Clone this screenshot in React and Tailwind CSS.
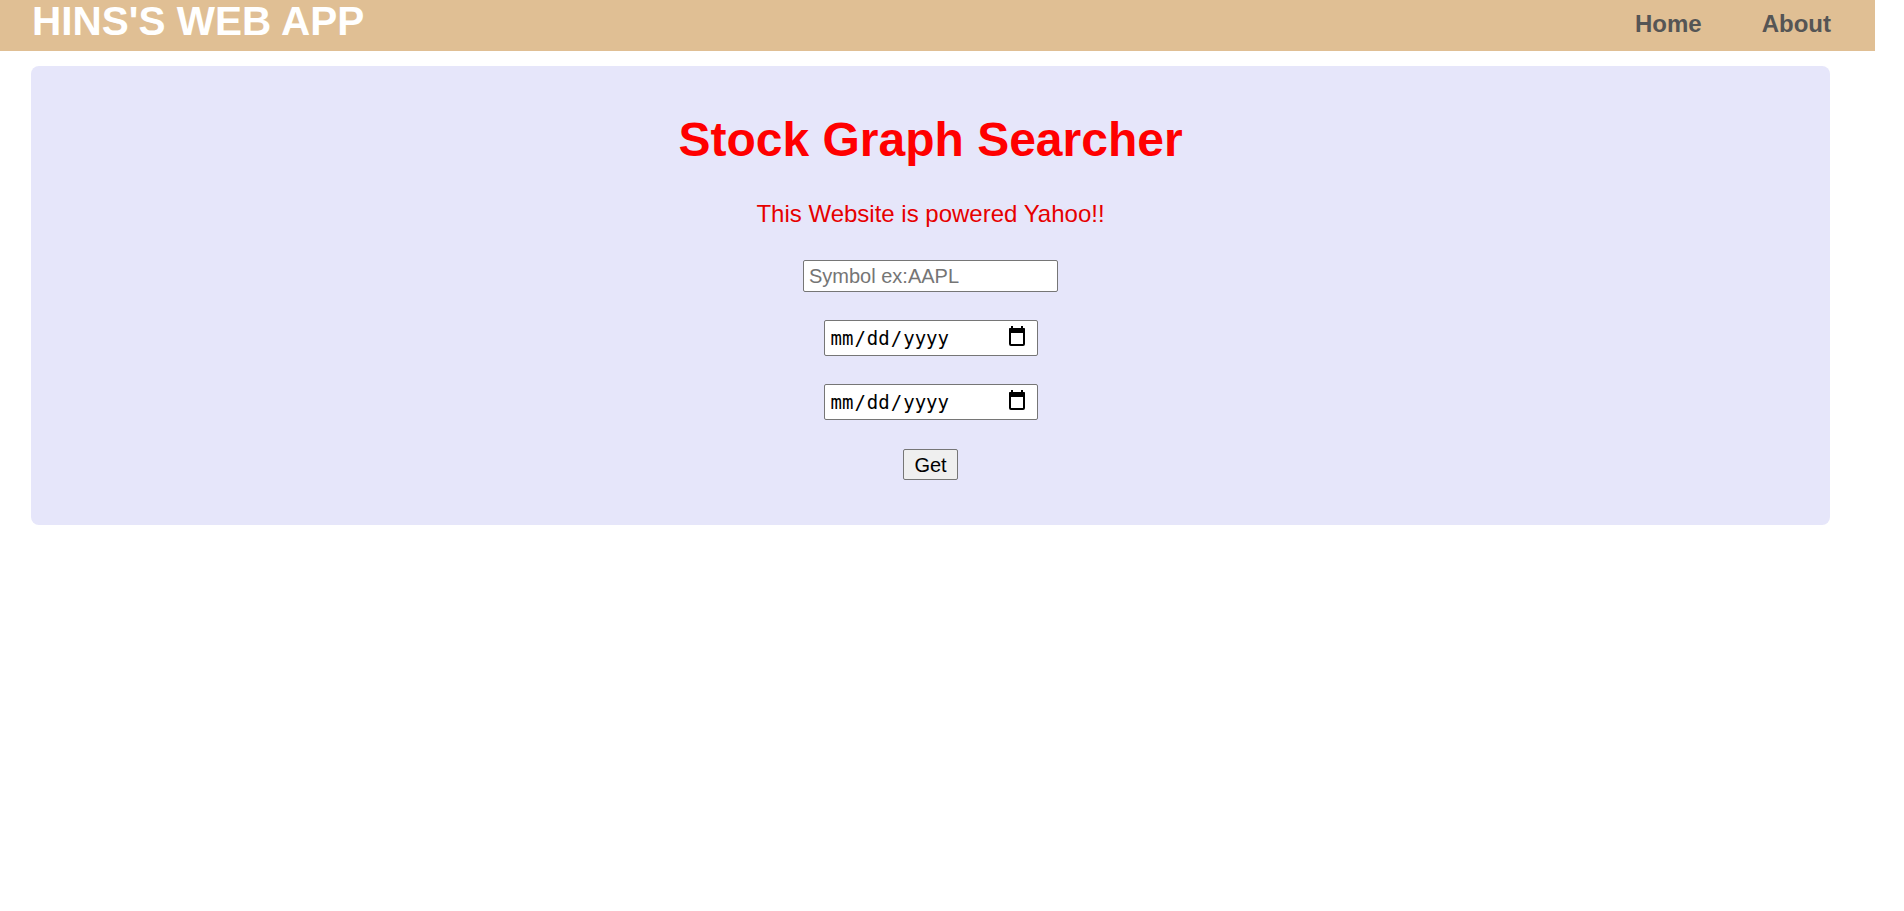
function CalendarIcon() {
  return (
    <svg width="16" height="20" viewBox="0 0 16 20" className="absolute right-[13px] top-[6px] pointer-events-none" aria-hidden="true">
      <rect x="2" y="0" width="2" height="3" fill="#000" />
      <rect x="12" y="0" width="2" height="3" fill="#000" />
      <rect x="0" y="2" width="16" height="5" rx="1" fill="#000" />
      <rect x="1" y="3" width="14" height="16" rx="1" fill="none" stroke="#000" strokeWidth="2" />
    </svg>
  );
}

function DateField() {
  return (
    <div className="relative mt-[28px] w-[214px] h-[36px]">
      <input
        type="date"
        className="w-[214px] h-[36px] border border-[#767676] rounded-[2px] bg-white pl-[5px] pr-[8px] text-[19px] text-black [&::-webkit-calendar-picker-indicator]:opacity-0 [&::-webkit-calendar-picker-indicator]:w-[20px] [&::-webkit-calendar-picker-indicator]:h-[20px]"
        style={{ fontFamily: '"DejaVu Sans Mono", monospace' }}
      />
      <CalendarIcon />
    </div>
  );
}

export default function App() {
  return (
    <div className="min-h-[911px] bg-white" style={{ fontFamily: '"Liberation Sans", Arial, sans-serif' }}>
      <header className="w-[1875px] h-[51px] bg-[#e0bf94] flex items-start justify-between pl-[32px] pr-[44px]">
        <h1 className="text-[40.5px] leading-[40px] font-bold text-white pt-[1px]">HINS'S WEB APP</h1>
        <nav className="flex gap-[60px] pt-[12px]">
          <a className="text-[24px] leading-[24px] font-bold text-[#555555]">Home</a>
          <a className="text-[24px] leading-[24px] font-bold text-[#555555]">About</a>
        </nav>
      </header>
      <main className="ml-[31px] mt-[15px] w-[1799px] bg-[#e6e6fa] rounded-[8px] pt-[46px] pb-[45px] flex flex-col items-center">
        <h2 className="text-[48px] leading-[55px] font-bold text-[#ff0000]">Stock Graph Searcher</h2>
        <p className="mt-[33px] text-[24px] leading-[28px] text-[#e60000]">This Website is powered Yahoo!!</p>
        <input
          type="text"
          placeholder="Symbol ex:AAPL"
          className="mt-[32px] w-[255px] h-[32px] border border-[#767676] rounded-[2px] bg-white px-[5px] text-[20px] text-black placeholder:text-[#757575] outline-none"
        />
        <DateField />
        <DateField />
        <button className="mt-[29px] w-[55px] h-[31px] border border-[#767676] rounded-[2px] bg-[#efefef] text-[20px] leading-[20px] text-black">
          Get
        </button>
      </main>
    </div>
  );
}
